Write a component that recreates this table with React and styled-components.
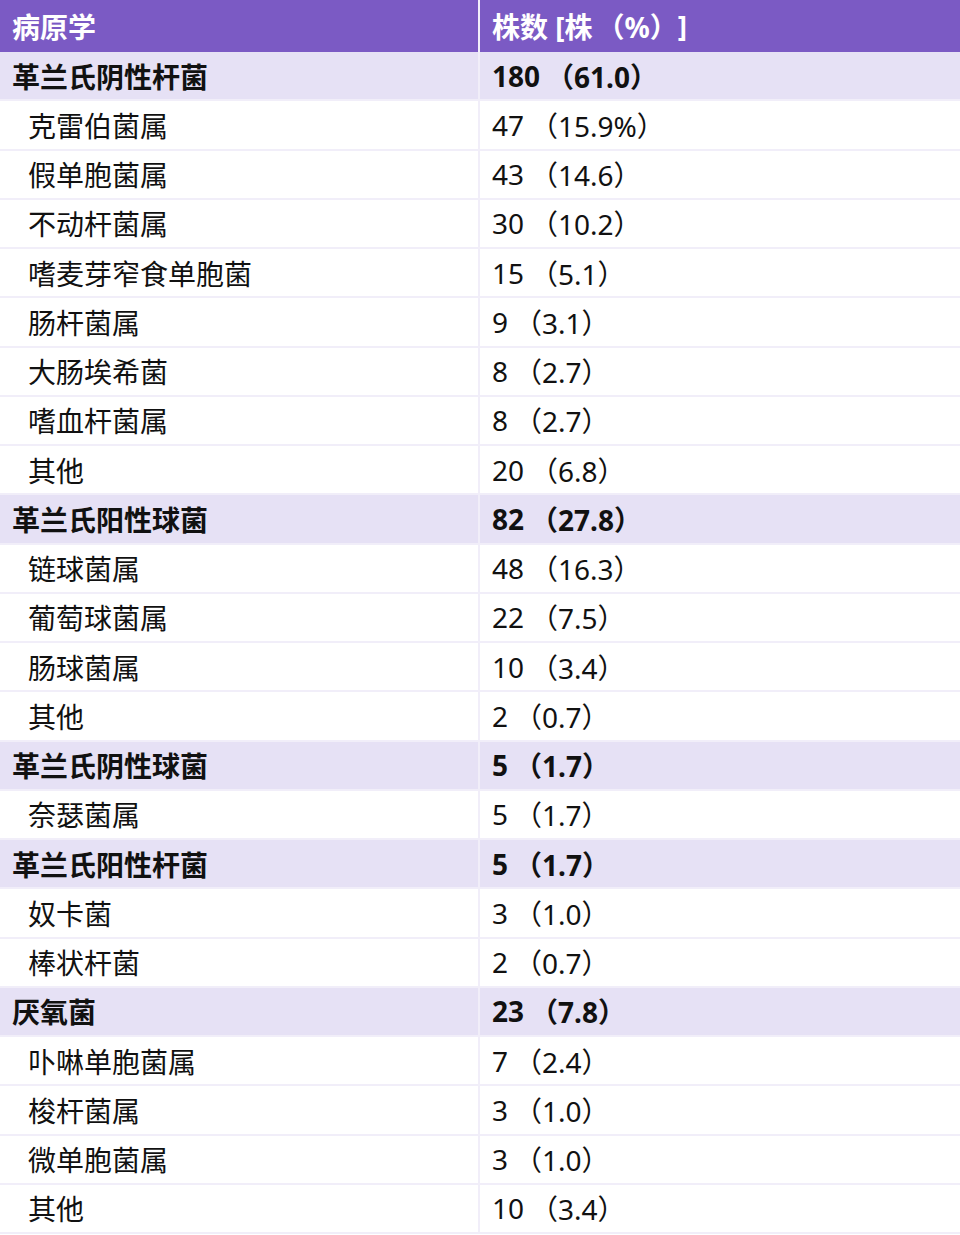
import React from "react"
import styled, {createGlobalStyle} from 'styled-components'

const GlobalStyle = createGlobalStyle`
  body{
    margin:0;
    background:#fff;
    font-family:"Noto Sans","Noto Sans CJK SC",sans-serif;
  }
`

const rows = [
  {name:'革兰氏阴性杆菌', value:'180（61.0）', group:true},
  {name:'克雷伯菌属', value:'47（15.9%）'},
  {name:'假单胞菌属', value:'43（14.6）'},
  {name:'不动杆菌属', value:'30（10.2）'},
  {name:'嗜麦芽窄食单胞菌', value:'15（5.1）'},
  {name:'肠杆菌属', value:'9（3.1）'},
  {name:'大肠埃希菌', value:'8（2.7）'},
  {name:'嗜血杆菌属', value:'8（2.7）'},
  {name:'其他', value:'20（6.8）'},
  {name:'革兰氏阳性球菌', value:'82（27.8）', group:true},
  {name:'链球菌属', value:'48（16.3）'},
  {name:'葡萄球菌属', value:'22（7.5）'},
  {name:'肠球菌属', value:'10（3.4）'},
  {name:'其他', value:'2（0.7）'},
  {name:'革兰氏阴性球菌', value:'5（1.7）', group:true},
  {name:'奈瑟菌属', value:'5（1.7）'},
  {name:'革兰氏阳性杆菌', value:'5（1.7）', group:true},
  {name:'奴卡菌', value:'3（1.0）'},
  {name:'棒状杆菌', value:'2（0.7）'},
  {name:'厌氧菌', value:'23（7.8）', group:true},
  {name:'卟啉单胞菌属', value:'7（2.4）'},
  {name:'梭杆菌属', value:'3（1.0）'},
  {name:'微单胞菌属', value:'3（1.0）'},
  {name:'其他', value:'10（3.4）'},
]

function Value({text}){
  const i = text.indexOf('（')
  return <>{text.slice(0,i)}<Paren>{text.slice(i)}</Paren></>
}

export default function App(){
  return(
    <Table>
      <GlobalStyle/>
      <HeadRow>
        <Cell first>病原学</Cell>
        <Cell>株数 [株<Paren wide>（%）</Paren>]</Cell>
      </HeadRow>
      {rows.map((r,i)=>(
        <Row key={i} group={r.group}>
          <Cell first indent={!r.group}>{r.name}</Cell>
          <Cell><Value text={r.value}/></Cell>
        </Row>
      ))}
    </Table>
  )
}

const Table = styled.div`
  width:960px;
  display:flex;
  flex-direction:column;
`

const Line = styled.div`
  display:grid;
  grid-template-columns:480px 1fr;
  box-sizing:border-box;
`

const HeadRow = styled(Line)`
  height:52px;
  background:#7b5ac4;
  color:#fff;
  font-weight:700;
  font-size:28px;
  & > div:first-child{ border-right-color:#f2effa; }
`

const Row = styled(Line).withConfig({shouldForwardProp:p=>p!=='group'})`
  height:49.25px;
  background:${p=>p.group ? '#e6e1f5' : '#fff'};
  border-bottom:2px solid #f1eef9;
  color:#111;
  font-size:28px;
  font-weight:${p=>p.group ? 700 : 400};
`

const Cell = styled.div.withConfig({shouldForwardProp:p=>p!=='first'&&p!=='indent'})`
  display:flex;
  align-items:center;
  box-sizing:border-box;
  padding-left:${p=>p.first ? (p.indent ? '28px' : '12px') : '12px'};
  border-right:${p=>p.first ? '2px solid #f1eef9' : 'none'};
  white-space:nowrap;
`

const Paren = styled.span.withConfig({shouldForwardProp:p=>p!=='wide'})`
  margin-left:${p=>p.wide ? '4px' : '6px'};
`
